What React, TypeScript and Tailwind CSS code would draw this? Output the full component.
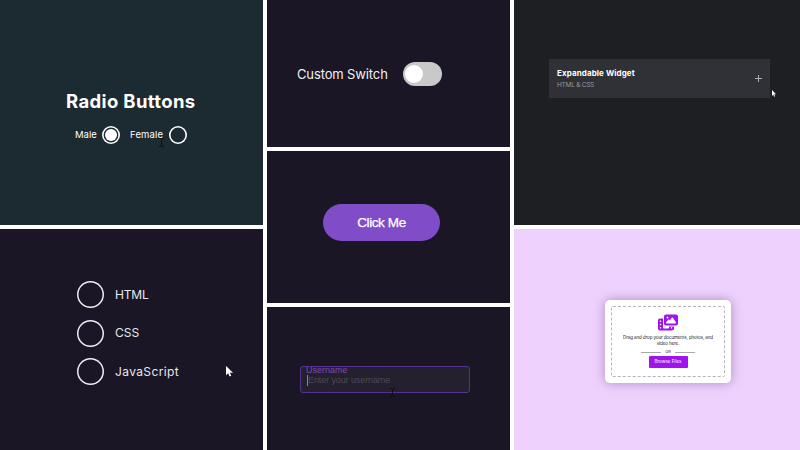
import type { ReactNode } from "react";
import { FaPhotoFilm } from "react-icons/fa6";

function Pointer({ className }: { className: string }) {
  return (
    <svg viewBox="0 0 12 19" preserveAspectRatio="none" className={`absolute ${className}`} fill="#fff">
      <path d="M0 0v16l3.8-3.5 2.4 5.7 2.8-1.2-2.4-5.5H12z" />
    </svg>
  );
}

function IBeam({ className }: { className: string }) {
  return (
    <svg viewBox="0 0 5 9" className={`absolute h-[9px] w-[5px] ${className}`} fill="none" stroke="#08080e" strokeWidth=".8">
      <path d="M0 .5h2M3 .5h2M2.5 1v7M0 8.5h2M3 8.5h2" />
    </svg>
  );
}

function Radio({ checked }: { checked?: boolean }) {
  return (
    <span className="flex size-[18px] items-center justify-center rounded-full inset-ring-[1.6px] inset-ring-white">
      {checked && <span className="size-3 rounded-full bg-white" />}
    </span>
  );
}

function Option({ children }: { children: ReactNode }) {
  return (
    <div className="flex h-[27px] items-center gap-[11px]">
      <span className="size-[27px] rounded-full inset-ring-[1.5px] inset-ring-[#eeeef2]" />
      <span className="text-[12px] leading-4 text-[#e9e8ee]">{children}</span>
    </div>
  );
}

export default function App() {
  return (
    <main className="grid h-[450px] w-[800px] grid-cols-[263px_243px_286px] gap-1 overflow-hidden bg-white font-['Inter','Liberation_Sans',sans-serif]">
      <div className="grid grid-rows-[225px_221px] gap-1">
        <section className="relative bg-[#1c2a32] pt-[87px] text-white">
          <h1 className="pl-[66px] text-[18.5px] leading-7 font-bold tracking-[0.36px] whitespace-nowrap">Radio Buttons</h1>
          <div className="flex pt-[11px] pl-[75px] text-[9.5px] leading-[18px]">
            <span className="w-[27px]">Male</span>
            <Radio checked />
            <span className="ml-[10px] w-[39px] tracking-[0.15px]">Female</span>
            <Radio />
          </div>
          <IBeam className="top-[138px] left-[159px]" />
        </section>
        <section className="relative flex flex-col gap-[11.5px] bg-[#1a1625] pt-[52px] pl-[77px]">
          <Option>
            <span className="tracking-[-0.15px]">HTML</span>
          </Option>
          <Option>
            <span>CSS</span>
          </Option>
          <Option>
            <span className="tracking-[0.38px]">JavaScript</span>
          </Option>
          <Pointer className="top-[137px] left-[226px] h-[11px] w-[7px]" />
        </section>
      </div>

      <div className="grid grid-rows-[147px_152px_143px] gap-1">
        <section className="flex items-start bg-[#1a1625] pt-[62px] pl-[30px]">
          <span className="w-[106px] text-[13px] leading-6 tracking-[-0.13px] whitespace-nowrap text-[#f0eff3]">Custom Switch</span>
          <span className="flex h-6 w-[39px] items-center rounded-full bg-[#c9c9c9] pl-0.5">
            <span className="size-[18px] rounded-full bg-white" />
          </span>
        </section>
        <section className="bg-[#1a1625] pt-[53px] pl-14">
          <button className="block h-[37px] w-[117px] rounded-full bg-[#804cc8] pt-px font-['Liberation_Sans',sans-serif] text-[13.5px] tracking-[-0.38px] text-white [-webkit-text-stroke:0.25px_white]">
            Click Me
          </button>
        </section>
        <section className="relative bg-[#1a1625] pt-[59px] pl-[33px]">
          <div className="h-[27px] w-[170px] rounded-[3px] border border-[#553292] bg-[#24202d] pl-[6px] font-['Liberation_Sans',sans-serif]">
            <div className="-ml-px h-[8px] text-[9px] leading-[7px] text-[#7a4ab6]">Username</div>
            <div className="h-[11px] border-l border-[#888591] text-[9px] leading-[10px] tracking-[-0.1px] text-[#4d4b57]">Enter your username</div>
          </div>
          <IBeam className="top-[81px] left-[123px]" />
        </section>
      </div>

      <div className="grid grid-rows-[225px_221px] gap-1">
        <section className="relative bg-[#1e1f23] pt-[59px] pl-[35px]">
          <div className="flex h-[39px] w-[221px] items-center justify-between bg-[#303136] px-2">
            <div>
              <h2 className="text-[8px] leading-[13px] font-bold tracking-[0.1px] whitespace-nowrap text-white">Expandable Widget</h2>
              <p className="text-[6.5px] leading-[11px] tracking-[-0.25px] text-[#98989c]">HTML &amp; CSS</p>
            </div>
            <svg className="size-[7px]" viewBox="0 0 7 7" stroke="#b0b0b3" strokeWidth="1">
              <path d="M3.5 0v7M0 3.5h7" />
            </svg>
          </div>
          <Pointer className="top-[90px] left-[258px] h-[7px] w-[4px]" />
        </section>
        <section className="overflow-hidden bg-[#eed2fd] pt-[71px] pl-[91px]">
          <div className="h-[83px] w-[126px] rounded-[5px] bg-white p-[6px] shadow-[0_0_12px_rgba(80,30,110,0.4)]">
            <div className="flex h-[71px] flex-col items-center rounded-[2px] border border-dashed border-[#b5b5b5] pt-[7px] text-[#28252b]">
              <FaPhotoFilm className="h-[17px] w-[20px] text-[#a012ee]" />
              <p className="pt-[4px] text-center text-[4.5px] leading-[6px] tracking-[-0.1px] whitespace-nowrap">
                Drag and drop your documents, photos, and
                <br />
                video here.
              </p>
              <div className="flex h-[9px] items-center gap-1 pt-px text-[4px] leading-none">
                <span className="h-px w-5 bg-[#aaa]" />
                OR
                <span className="h-px w-5 bg-[#aaa]" />
              </div>
              <button className="h-3 w-[39px] shrink-0 rounded-[1px] bg-[#a012ee] text-[4.5px] leading-none text-white">Browse Files</button>
            </div>
          </div>
        </section>
      </div>
    </main>
  );
}
